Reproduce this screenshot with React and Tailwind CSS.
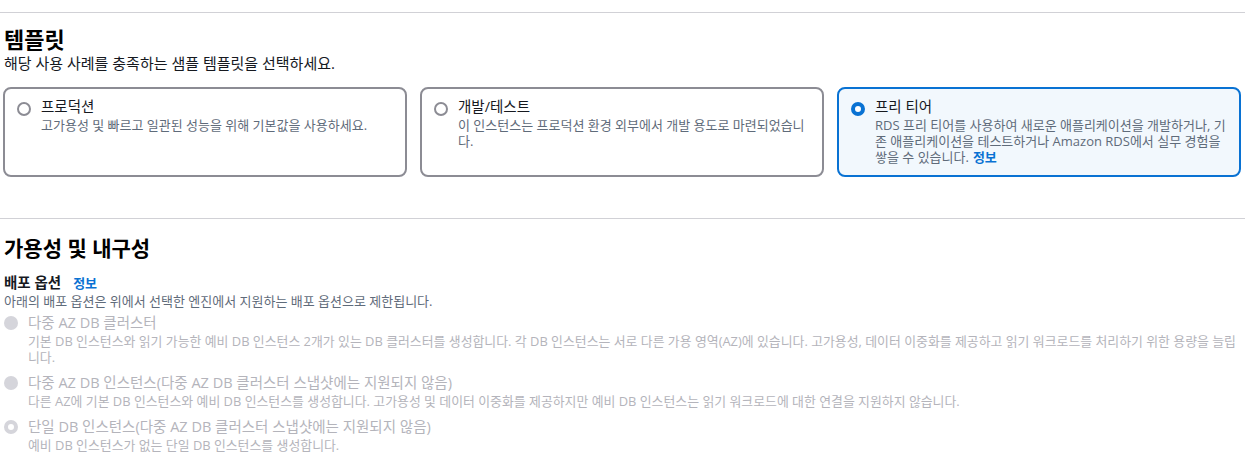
const font = {
  fontFamily: '"Open Sans", "Noto Sans CJK KR", sans-serif',
};

const templates = [
  {
    title: "프로덕션",
    desc: "고가용성 및 빠르고 일관된 성능을 위해 기본값을 사용하세요.",
  },
  {
    title: "개발/테스트",
    desc: "이 인스턴스는 프로덕션 환경 외부에서 개발 용도로 마련되었습니다.",
  },
  {
    title: "프리 티어",
    desc: "RDS 프리 티어를 사용하여 새로운 애플리케이션을 개발하거나, 기존 애플리케이션을 테스트하거나 Amazon RDS에서 실무 경험을 쌓을 수 있습니다.",
    info: true,
    selected: true,
  },
];

const deployOptions = [
  {
    title: "다중 AZ DB 클러스터",
    desc: "기본 DB 인스턴스와 읽기 가능한 예비 DB 인스턴스 2개가 있는 DB 클러스터를 생성합니다. 각 DB 인스턴스는 서로 다른 가용 영역(AZ)에 있습니다. 고가용성, 데이터 이중화를 제공하고 읽기 워크로드를 처리하기 위한 용량을 늘립니다.",
  },
  {
    title: "다중 AZ DB 인스턴스(다중 AZ DB 클러스터 스냅샷에는 지원되지 않음)",
    desc: "다른 AZ에 기본 DB 인스턴스와 예비 DB 인스턴스를 생성합니다. 고가용성 및 데이터 이중화를 제공하지만 예비 DB 인스턴스는 읽기 워크로드에 대한 연결을 지원하지 않습니다.",
  },
  {
    title: "단일 DB 인스턴스(다중 AZ DB 클러스터 스냅샷에는 지원되지 않음)",
    desc: "예비 DB 인스턴스가 없는 단일 DB 인스턴스를 생성합니다.",
    checked: true,
  },
];

function Radio({ checked }) {
  return checked ? (
    <span className="mt-[6px] w-[14px] h-[14px] shrink-0 rounded-full border-[4px] border-[#0972d3] bg-white" />
  ) : (
    <span className="mt-[6px] w-[14px] h-[14px] shrink-0 rounded-full border-2 border-[#8c8c94] bg-white" />
  );
}

function DisabledRadio({ checked }) {
  return checked ? (
    <span className="mt-[4px] w-[14px] h-[14px] shrink-0 rounded-full border-[4px] border-[#d5d5db] bg-white" />
  ) : (
    <span className="mt-[4px] w-[14px] h-[14px] shrink-0 rounded-full bg-[#d5d5db]" />
  );
}

export default function App() {
  return (
    <div className="bg-white w-[1245px] h-[471px] overflow-hidden text-[#16191f]" style={font}>
      <div className="pt-3 px-1">
        {/* 템플릿 */}
        <div className="border-t border-[#d1d1d6] mx-[-4px]" />
        <h2 className="mt-[14px] text-[22px] leading-[24px] font-bold text-black">템플릿</h2>
        <p className="mt-[2px] text-[15px] leading-[20px]">
          해당 사용 사례를 충족하는 샘플 템플릿을 선택하세요.
        </p>

        <div className="mt-[14px] ml-[-1px] grid grid-cols-3 gap-[13px]">
          {templates.map((t) => (
            <div
              key={t.title}
              className={`h-[90px] rounded-lg border-2 px-3 pt-[7px] flex gap-[10px] ${
                t.selected
                  ? "border-[#0972d3] bg-[#f2f8fd]"
                  : "border-[#8c8c94] bg-white"
              }`}
            >
              <Radio checked={t.selected} />
              <div className="min-w-0">
                <div className="text-[14.5px] leading-[21px]">{t.title}</div>
                <div className="text-[13px] leading-[16px] text-[#5f6b7a]">
                  {t.desc}
                  {t.info && (
                    <span className="ml-1 font-bold text-[#0972d3]">정보</span>
                  )}
                </div>
              </div>
            </div>
          ))}
        </div>

        {/* 가용성 및 내구성 */}
        <div className="mt-[41px] border-t border-[#d1d1d6] mx-[-4px]" />
        <h2 className="mt-[15px] text-[21px] leading-[28px] font-bold text-black">가용성 및 내구성</h2>

        <div className="mt-[11px] flex items-center gap-3">
          <span className="text-[14.5px] leading-[20px] font-bold">배포 옵션</span>
          <span className="text-[13px] leading-[20px] font-bold text-[#0972d3]">정보</span>
        </div>
        <p className="text-[13px] leading-[16px] text-[#5f6b7a]">
          아래의 배포 옵션은 위에서 선택한 엔진에서 지원하는 배포 옵션으로 제한됩니다.
        </p>

        <div className="mt-[3px] flex flex-col gap-[7px]">
          {deployOptions.map((o) => (
            <div key={o.title} className="flex gap-[10px]">
              <DisabledRadio checked={o.checked} />
              <div className="min-w-0">
                <div className="text-[14.5px] leading-[21px] text-[#b4b4bb]">{o.title}</div>
                <div className="text-[12.9px] leading-[16px] text-[#b4b4bb]">{o.desc}</div>
              </div>
            </div>
          ))}
        </div>
      </div>
    </div>
  );
}
